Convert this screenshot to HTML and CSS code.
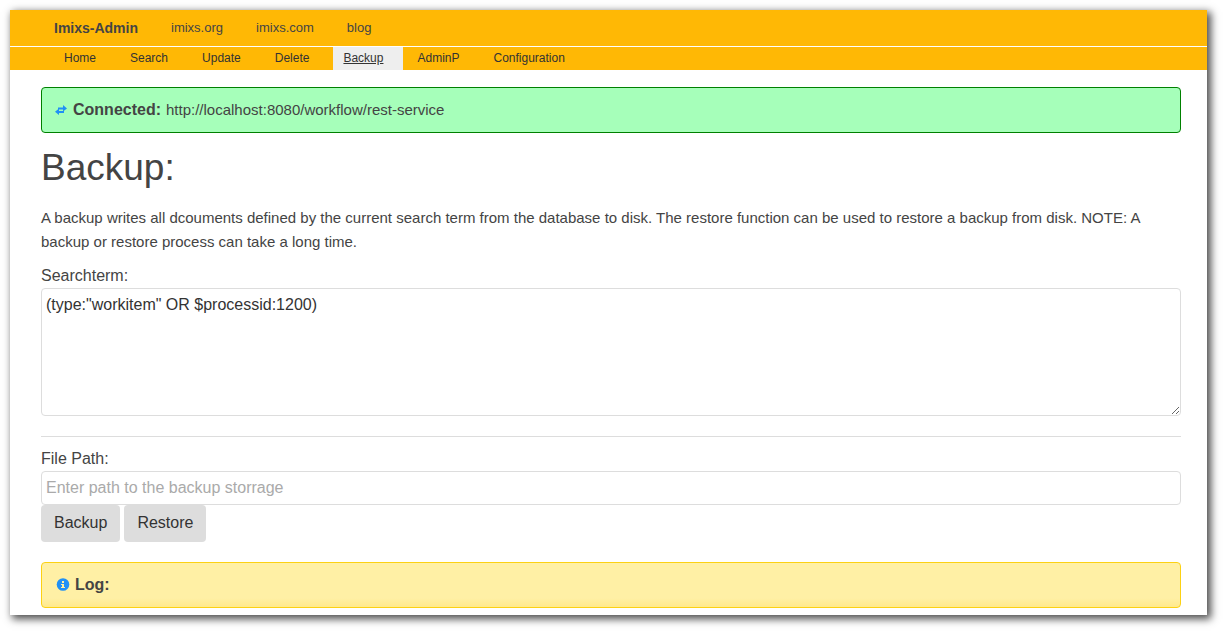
FILE: index.html
```html
<!DOCTYPE html>
<html lang="en">
<head>
<meta charset="utf-8">
<meta name="viewport" content="width=device-width, initial-scale=1">
<title>Imixs-Admin</title>
<link rel="stylesheet" href="styles.css">
</head>
<body>
<div class="page">
  <header>
    <nav class="topbar" aria-label="Sites">
      <a class="brand" href="#">Imixs-Admin</a>
      <a href="#">imixs.org</a>
      <a href="#">imixs.com</a>
      <a href="#">blog</a>
    </nav>
    <nav class="menu" aria-label="Main">
      <a href="#">Home</a>
      <a href="#">Search</a>
      <a href="#">Update</a>
      <a href="#">Delete</a>
      <a class="active" href="#" aria-current="page">Backup</a>
      <a href="#">AdminP</a>
      <a href="#">Configuration</a>
    </nav>
  </header>
  <main class="content">
    <div class="alert connected">
      <svg class="icon" viewBox="0 0 14 14" aria-hidden="true"><path d="M9 2l4 3.500-4 3V6.500H4v-2h5zM5 5.500V8h5v2H5v2L1 8.800z"/></svg>
      <strong>Connected:</strong>
      <span>http://localhost:8080/workflow/rest-service</span>
    </div>
    <h1>Backup:</h1>
    <p>A backup writes all dcouments defined by the current search term from the database to disk. The restore function can be used to restore a backup from disk. NOTE: A backup or restore process can take a long time.</p>
    <form>
      <label for="term">Searchterm:</label>
      <textarea class="field term" id="term">(type:"workitem" OR $processid:1200)</textarea>
      <hr>
      <label for="path">File Path:</label>
      <input class="field" id="path" type="text" placeholder="Enter path to the backup storrage">
      <div class="actions">
        <button type="button">Backup</button>
        <button type="button">Restore</button>
      </div>
    </form>
    <div class="alert log">
      <svg class="icon" viewBox="0 0 14 14" aria-hidden="true"><circle cx="7" cy="6.500" r="6.300"/><path class="mark" d="M6 3h2v2H6zM5 6h3v3h1v1H5V9h1V7H5z"/></svg>
      <strong>Log:</strong>
    </div>
  </main>
</div>
</body>
</html>
```
FILE: styles.css
```css
* { box-sizing: border-box; }
body {
  margin: 0;
  padding: 10px 16px 16px 10px;
  background: #fff;
  color: #444;
  font: 16px/24px "Liberation Sans", Arial, sans-serif;
}
.page {
  background: #fff;
  box-shadow: 3px 3px 8px 1px rgba(0, 0, 0, 0.7);
}
.topbar, .menu {
  display: flex;
  background: #ffb805;
}
.topbar {
  gap: 33px;
  padding-left: 44px;
  line-height: 36px;
  font-size: 13px;
}
.topbar a, .menu a { color: inherit; text-decoration: none; }
.topbar .brand { font-size: 14px; font-weight: bold; }
.menu {
  gap: 4px;
  margin-top: 1px;
  padding-left: 44px;
  color: #333;
  font-size: 12px;
  line-height: 23px;
}
.menu a { padding: 0 20px 0 10px; }
.menu .active {
  background: #eee;
  text-decoration: underline;
}
.content { padding: 17px 26px 7px 31px; }
.alert {
  display: flex;
  align-items: center;
  gap: 5px;
  padding: 10px 12px;
  border: 1px solid;
  border-radius: 4px;
}
.alert span, p { font-size: 15px; }
.connected { border-color: #008000; background: #a6ffba; }
.log {
  margin-top: 20px;
  padding-left: 14px;
  border-color: #fcd113;
  background: linear-gradient(#fff0a5 80%, #ffe98c);
}
.icon { width: 14px; height: 14px; fill: #2090f5; }
.mark { fill: #fff0a5; }
h1 {
  margin: 13px 0 16px;
  font-size: 37px;
  font-weight: normal;
  line-height: 44px;
}
p { margin: 0 0 10px; }
label { display: block; }
.field {
  display: block;
  width: 100%;
  height: 34px;
  padding: 4px;
  border: 1px solid #ddd;
  border-radius: 4px;
  background: #fff;
  color: #333;
  font: inherit;
}
.term { height: 128px; resize: vertical; }
.field::placeholder { color: #aaa; }
hr {
  margin: 20px 0 10px;
  border: 0;
  border-top: 1px solid #ddd;
}
.actions { display: flex; gap: 4px; }
button {
  padding: 6px 13px 7px;
  border: 0;
  border-radius: 4px;
  background: #ddd;
  color: #333;
  font: inherit;
}
```
